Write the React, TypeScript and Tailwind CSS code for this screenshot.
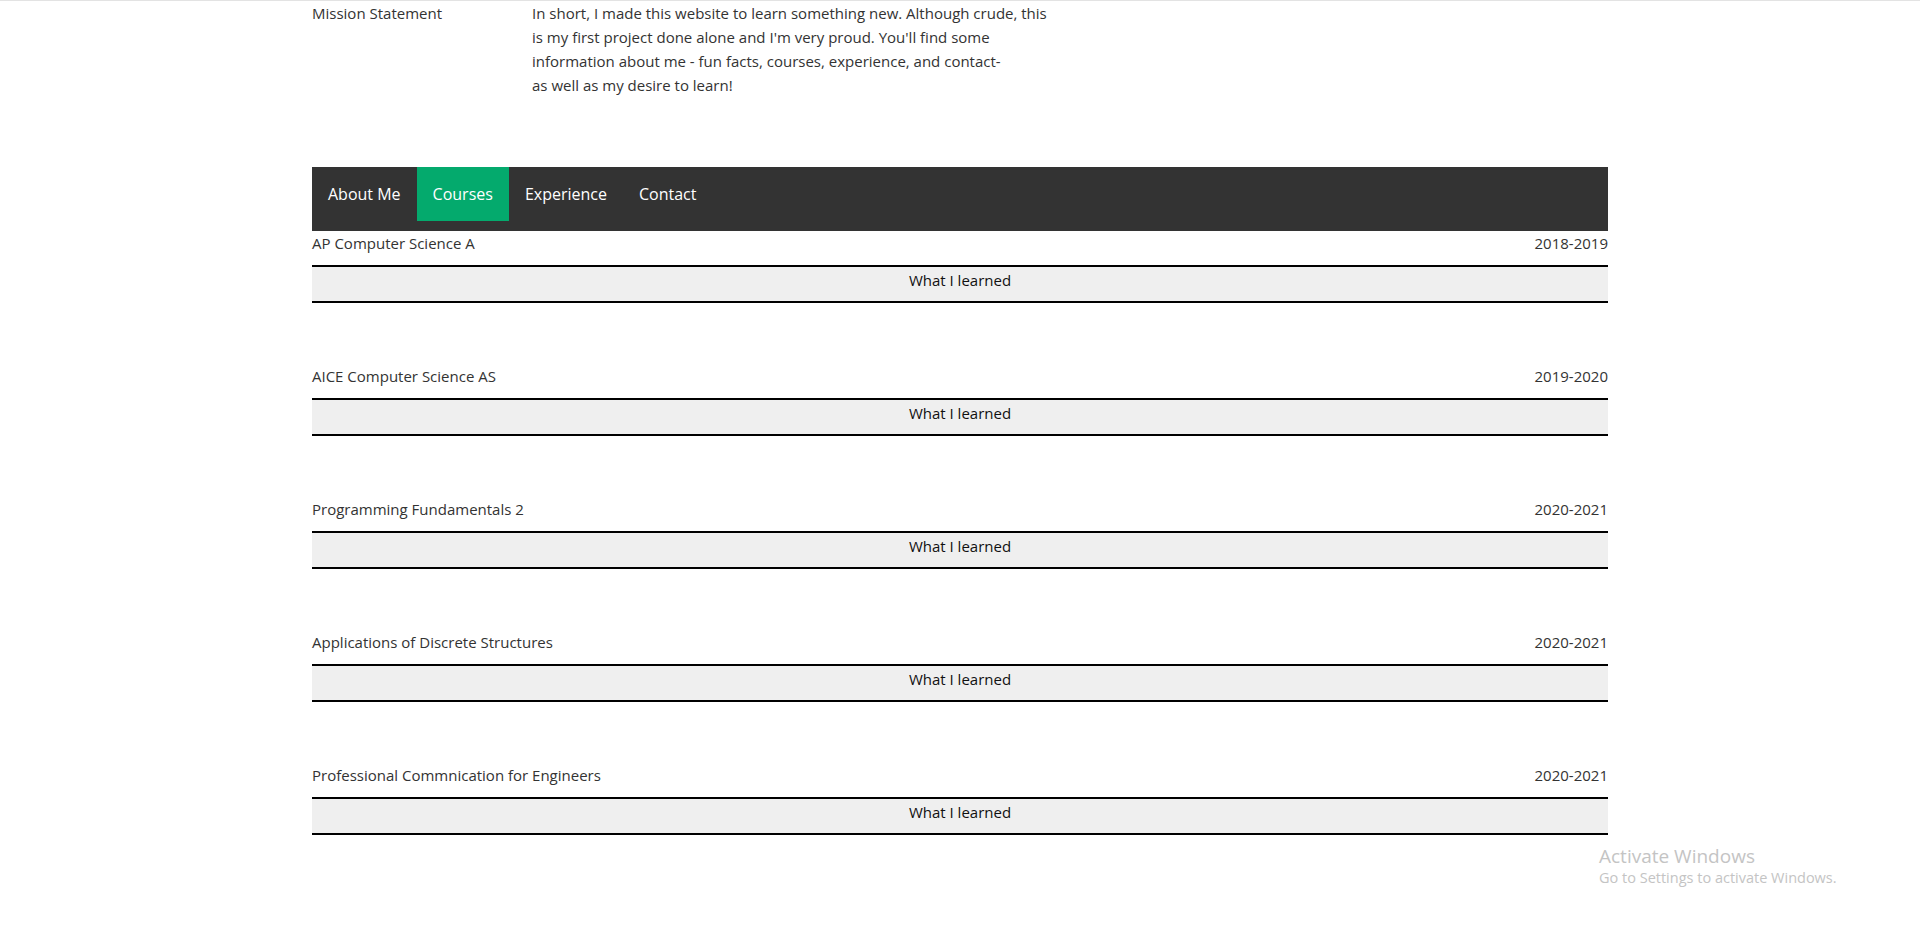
import React from "react";

const courses = [
  { title: "AP Computer Science A", years: "2018-2019" },
  { title: "AICE Computer Science AS", years: "2019-2020" },
  { title: "Programming Fundamentals 2", years: "2020-2021" },
  { title: "Applications of Discrete Structures", years: "2020-2021" },
  { title: "Professional Commnication for Engineers", years: "2020-2021" },
];

const navItems = ["About Me", "Courses", "Experience", "Contact"];

export default function App() {
  return (
    <div
      className="relative min-h-[937px] w-full bg-white border-t border-[#e3e3e3] text-[#333]"
      style={{ fontFamily: '"Open Sans", "Noto Sans", sans-serif' }}
    >
      <div className="mx-auto w-[1296px]">
        <div className="flex text-[15px] leading-6">
          <div className="w-[220px] shrink-0">Mission Statement</div>
          <div className="whitespace-nowrap">
            In short, I made this website to learn something new. Although crude, this
            <br />
            is my first project done alone and I'm very proud. You'll find some
            <br />
            information about me - fun facts, courses, experience, and contact-
            <br />
            as well as my desire to learn!
          </div>
        </div>

        <nav className="mt-[70px] flex h-16 items-start bg-[#333]">
          {navItems.map((item) => (
            <div
              key={item}
              className={
                item === "Courses"
                  ? "flex h-[54px] items-center px-4 text-[16px] text-white bg-[#04AA6D]"
                  : "flex h-[54px] items-center px-4 text-[16px] text-white"
              }
            >
              {item}
            </div>
          ))}
        </nav>

        <div className="flex flex-col">
          {courses.map((c) => (
            <div key={c.title} className="mb-[61px]">
              <div className="flex h-6 items-center justify-between text-[15px]">
                <span>{c.title}</span>
                <span>{c.years}</span>
              </div>
              <div className="mt-[10px] flex h-[38px] items-start justify-center border-y-2 border-black bg-[#efefef] pt-[1px] text-[15px] leading-6 text-[#111]">
                What I learned
              </div>
            </div>
          ))}
        </div>
      </div>

      <div className="absolute left-[1599px] top-[843px] text-[#c4c4c4]">
        <div className="text-[19px] leading-6">Activate Windows</div>
        <div className="text-[14.5px] leading-5">Go to Settings to activate Windows.</div>
      </div>
    </div>
  );
}
